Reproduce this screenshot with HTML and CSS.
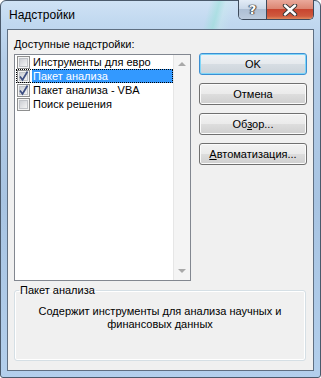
FILE: index.html
```
<!DOCTYPE html>
<html>
<head>
<meta charset="utf-8">
<link rel="stylesheet" href="styles.css">
</head>
<body>
<div class="window">
  <div class="titlebar">
    <span class="title">Надстройки</span>
    <div class="caption">
      <div class="cap-help">?</div>
      <div class="cap-close">
        <svg width="18" height="12" viewBox="0 0 18 12">
          <path d="M4 1.5 L14 10.5 M14 1.5 L4 10.5" stroke="#3a3a3a" stroke-width="4.4" stroke-linecap="round" fill="none"/>
          <path d="M4 1.5 L14 10.5 M14 1.5 L4 10.5" stroke="#ffffff" stroke-width="2.4" stroke-linecap="round" fill="none"/>
        </svg>
      </div>
    </div>
  </div>
  <div class="client">
    <div class="top">
      <div class="left">
        <div class="label"><u>Д</u>оступные надстройки:</div>
        <div class="listbox">
          <div class="items">
            <div class="row">
              <svg class="cb" width="13" height="13" viewBox="0 0 13 13"><defs><linearGradient id="g1" x1="0" y1="0" x2="1" y2="1"><stop offset="0" stop-color="#c9ccd2"/><stop offset="1" stop-color="#f6f6f6"/></linearGradient></defs><rect x="0.5" y="0.5" width="12" height="12" fill="#f4f4f4" stroke="#8e8f8f"/><rect x="2.5" y="2.5" width="8" height="8" fill="url(#g1)" stroke="#c0c3c8"/></svg>
              <span class="text">Инструменты для евро</span>
            </div>
            <div class="row focus">
              <svg class="cb" width="13" height="13" viewBox="0 0 13 13"><rect x="0.5" y="0.5" width="12" height="12" fill="#f4f4f4" stroke="#8e8f8f"/><rect x="2.5" y="2.5" width="8" height="8" fill="url(#g1)" stroke="#c0c3c8"/><path d="M3 6.5 L5.5 10 L10.5 1.5" stroke="#3c4d80" stroke-width="1.7" fill="none"/></svg>
              <span class="text sel">Пакет анализа</span>
            </div>
            <div class="row">
              <svg class="cb" width="13" height="13" viewBox="0 0 13 13"><rect x="0.5" y="0.5" width="12" height="12" fill="#f4f4f4" stroke="#8e8f8f"/><rect x="2.5" y="2.5" width="8" height="8" fill="url(#g1)" stroke="#c0c3c8"/><path d="M3 6.5 L5.5 10 L10.5 1.5" stroke="#3c4d80" stroke-width="1.7" fill="none"/></svg>
              <span class="text">Пакет анализа - VBA</span>
            </div>
            <div class="row">
              <svg class="cb" width="13" height="13" viewBox="0 0 13 13"><rect x="0.5" y="0.5" width="12" height="12" fill="#f4f4f4" stroke="#8e8f8f"/><rect x="2.5" y="2.5" width="8" height="8" fill="url(#g1)" stroke="#c0c3c8"/></svg>
              <span class="text">Поиск решения</span>
            </div>
          </div>
          <div class="scrollbar">
            <span class="arrow up"></span>
            <span class="arrow down"></span>
          </div>
        </div>
      </div>
      <div class="buttons">
        <div class="btn default">OK</div>
        <div class="btn">Отмена</div>
        <div class="btn">Об<u>з</u>ор...</div>
        <div class="btn"><u>А</u>втоматизация...</div>
      </div>
    </div>
    <fieldset class="group">
      <legend>Пакет анализа</legend>
      <p class="desc">Содержит инструменты для анализа научных и<br>финансовых данных</p>
    </fieldset>
  </div>
</div>
</body>
</html>
```
FILE: styles.css
```
html, body {
  margin: 0;
  padding: 0;
  background: #ffffff;
}
body {
  font-family: "Liberation Sans", Arial, sans-serif;
  font-size: 11px;
  color: #000;
}
.window {
  width: 321px;
  height: 378px;
  box-sizing: border-box;
  border: 1px solid #4b5a6c;
  border-radius: 6px 6px 3px 3px;
  background:
    linear-gradient(105deg, transparent 64%, rgba(150, 225, 215, 0.55) 67%, rgba(200, 240, 235, 0.3) 69%, transparent 72%) 0 0 / 100% 28px no-repeat,
    linear-gradient(180deg, #cfe2f5 0px, #c2d9f0 20px, #b4cde8 60px, #a8c4e2 200px, #b3cfec 378px);
  padding: 0 6px 6px 6px;
  display: flex;
  flex-direction: column;
}
.titlebar {
  height: 28px;
  display: flex;
  justify-content: space-between;
  align-items: flex-start;
  flex: none;
}
.title {
  font-size: 12px;
  line-height: 15px;
  padding: 7px 0 0 2px;
  color: #000;
}
.caption {
  display: flex;
  margin-top: -1px;
  height: 19px;
  border: 1px solid #3e4b5c;
  border-top: none;
  border-radius: 0 0 5px 5px;
  overflow: hidden;
}
.cap-help {
  width: 27px;
  background: linear-gradient(180deg, #e3ecf6 0%, #cbd9e9 45%, #aebfd4 50%, #bccbdd 100%);
  color: #fff;
  font-family: "DejaVu Sans", sans-serif;
  font-weight: bold;
  font-size: 13px;
  line-height: 19px;
  text-align: center;
  text-shadow: 0 0 1px #333, 0 0 1px #333, 1px 0 1px #444, -1px 0 1px #444;
  border-right: 1px solid #3e4b5c;
}
.cap-close {
  width: 46px;
  background: linear-gradient(180deg, #eaa99b 0%, #dc8673 45%, #c8452f 50%, #cf5a3e 85%, #e08a5e 100%);
  display: flex;
  align-items: center;
  justify-content: center;
}
.client {
  flex: 1;
  border: 1px solid #5f6f82;
  background: #f0f0f0;
  padding: 7px 6px 9px 6px;
  display: flex;
  flex-direction: column;
}
.top {
  display: flex;
  gap: 8px;
}
.left {
  width: 177px;
}
.label {
  line-height: 14px;
  height: 14px;
}
.listbox {
  margin-top: 3px;
  height: 227px;
  box-sizing: border-box;
  border: 1px solid #828790;
  background: #fff;
  display: flex;
}
.items {
  flex: 1;
  padding-left: 1px;
}
.row {
  height: 14px;
  display: flex;
  align-items: center;
  box-sizing: border-box;
}
.row.focus {
  outline: 1px dotted #000;
  outline-offset: -1px;
}
.cb {
  flex: none;
  margin-left: 1px;
}
.text {
  flex: 1;
  height: 14px;
  line-height: 14px;
  margin-left: 2px;
  padding-left: 1px;
  white-space: nowrap;
}
.text.sel {
  background: #3399ff;
  color: #fff;
  margin-right: 0;
}
.scrollbar {
  width: 17px;
  background: #f4f4f4;
  border-left: 1px solid #e6e6e6;
  box-sizing: border-box;
  display: flex;
  flex-direction: column;
  justify-content: space-between;
  align-items: center;
  padding: 7px 0 7px 0;
}
.arrow {
  width: 0;
  height: 0;
  border-left: 4px solid transparent;
  border-right: 4px solid transparent;
}
.arrow.up {
  border-bottom: 4px solid #a9a9a9;
}
.arrow.down {
  border-top: 4px solid #a9a9a9;
}
.buttons {
  width: 108px;
  padding-top: 16px;
  display: flex;
  flex-direction: column;
  gap: 8px;
}
.btn {
  height: 22px;
  box-sizing: border-box;
  border: 1px solid #707070;
  border-radius: 3px;
  background: linear-gradient(180deg, #f2f2f2 0%, #ebebeb 48%, #dddddd 52%, #cfcfcf 100%);
  box-shadow: inset 0 0 0 1px #fbfbfb;
  text-align: center;
  line-height: 20px;
}
.btn.default {
  border-color: #3c8fd2;
  box-shadow: inset 0 0 0 1px #7fd6f8;
  background: linear-gradient(180deg, #eef2f5 0%, #e6eaee 48%, #d6dde3 52%, #cbd3da 100%);
}
.group {
  flex: 1;
  margin: 3px 1px 0 0;
  padding: 0;
  min-width: 0;
  border: 1px solid #d5dfe5;
  border-radius: 3px;
  box-shadow: inset 0 0 0 1px #ffffff;
}
.group legend {
  margin-left: 4px;
  padding: 0 1px;
  line-height: 13px;
}
.desc {
  margin: 8px 0 0 0;
  text-align: center;
  line-height: 13px;
}
```
